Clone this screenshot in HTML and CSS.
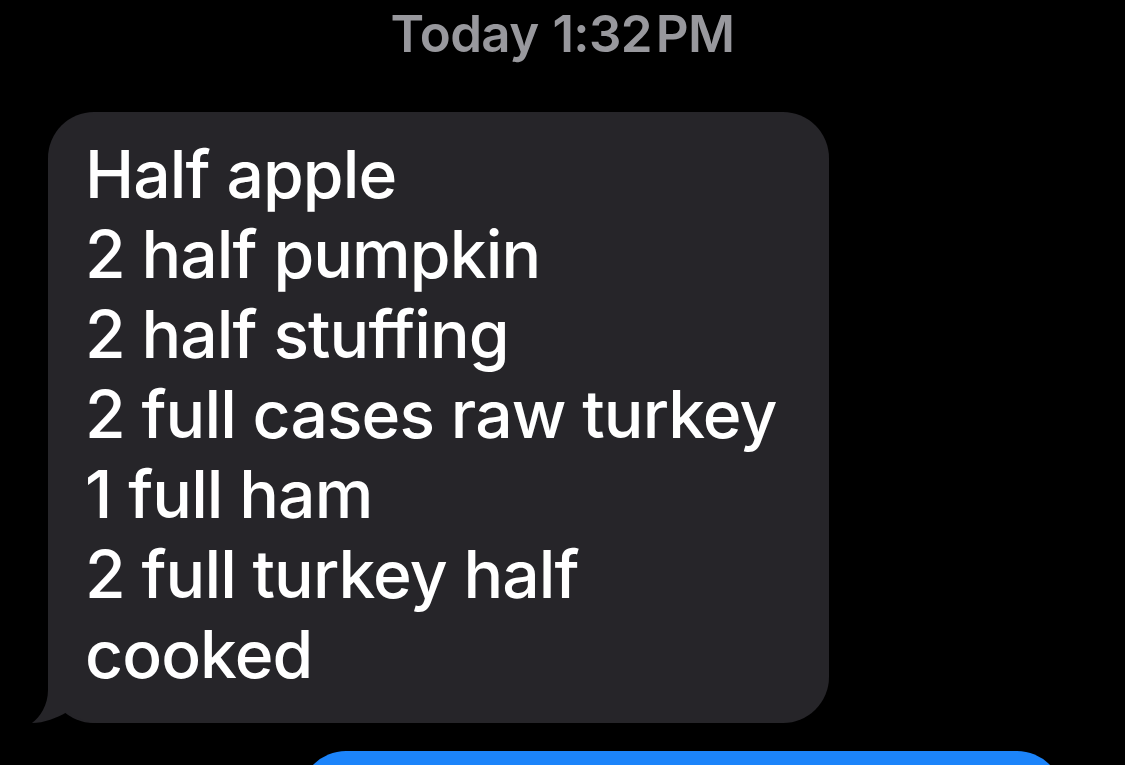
FILE: index.html
```html
<!DOCTYPE html>
<html>
<head>
<meta charset="utf-8">
<link rel="stylesheet" href="styles.css">
</head>
<body>
<div class="thread">
  <div class="stamp"><span class="day">Today</span> <span class="clock">1:32&#8202;PM</span></div>
  <div class="row row-in">
    <div class="bubble in">
      <svg class="tail" width="70" height="53" viewBox="0 0 70 53"><path d="M16 0 L70 0 L70 53 L64 53 C 55 53 45 48 35 42 C 25 48 12 53 0 53 C 8 47 16 35 16 20 Z" fill="#262529"/></svg>
      <div class="text">Half apple<br>2 half pumpkin<br>2 half stuffing<br>2 full cases raw turkey<br>1 full ham<br>2 full turkey half<br>cooked</div>
    </div>
  </div>
  <div class="row row-out">
    <div class="bubble out"></div>
  </div>
</div>
</body>
</html>
```
FILE: styles.css
```css
html, body {
  margin: 0;
  padding: 0;
  background: #000;
  overflow: hidden;
}
.thread {
  width: 1125px;
  height: 765px;
  overflow: hidden;
  display: flex;
  flex-direction: column;
  font-family: Inter, "Liberation Sans", sans-serif;
}
.stamp {
  padding-top: 4px;
  height: 60px;
  line-height: 60px;
  font-size: 51px;
  color: #98989d;
  text-align: center;
  letter-spacing: -0.6px;
}
.day { font-weight: 600; }
.clock { font-weight: 600; }
.row {
  display: flex;
  flex-shrink: 0;
}
.row-in {
  margin-top: 48px;
  padding-left: 48px;
}
.row-out {
  margin-top: 28px;
  justify-content: flex-end;
  padding-right: 62px;
}
.bubble {
  position: relative;
  border-radius: 46px;
}
.in {
  background: #262529;
  width: 781px;
  box-sizing: border-box;
  padding: 22px 20px 29px 37px;
}
.tail {
  position: absolute;
  left: -16px;
  bottom: 0;
  display: block;
}
.text {
  position: relative;
  z-index: 1;
  color: #fff;
  font-size: 66px;
  font-weight: 500;
  line-height: 80px;
  letter-spacing: -0.9px;
  white-space: nowrap;
}
.out {
  background: #1c84fa;
  width: 763px;
  height: 120px;
}
```
